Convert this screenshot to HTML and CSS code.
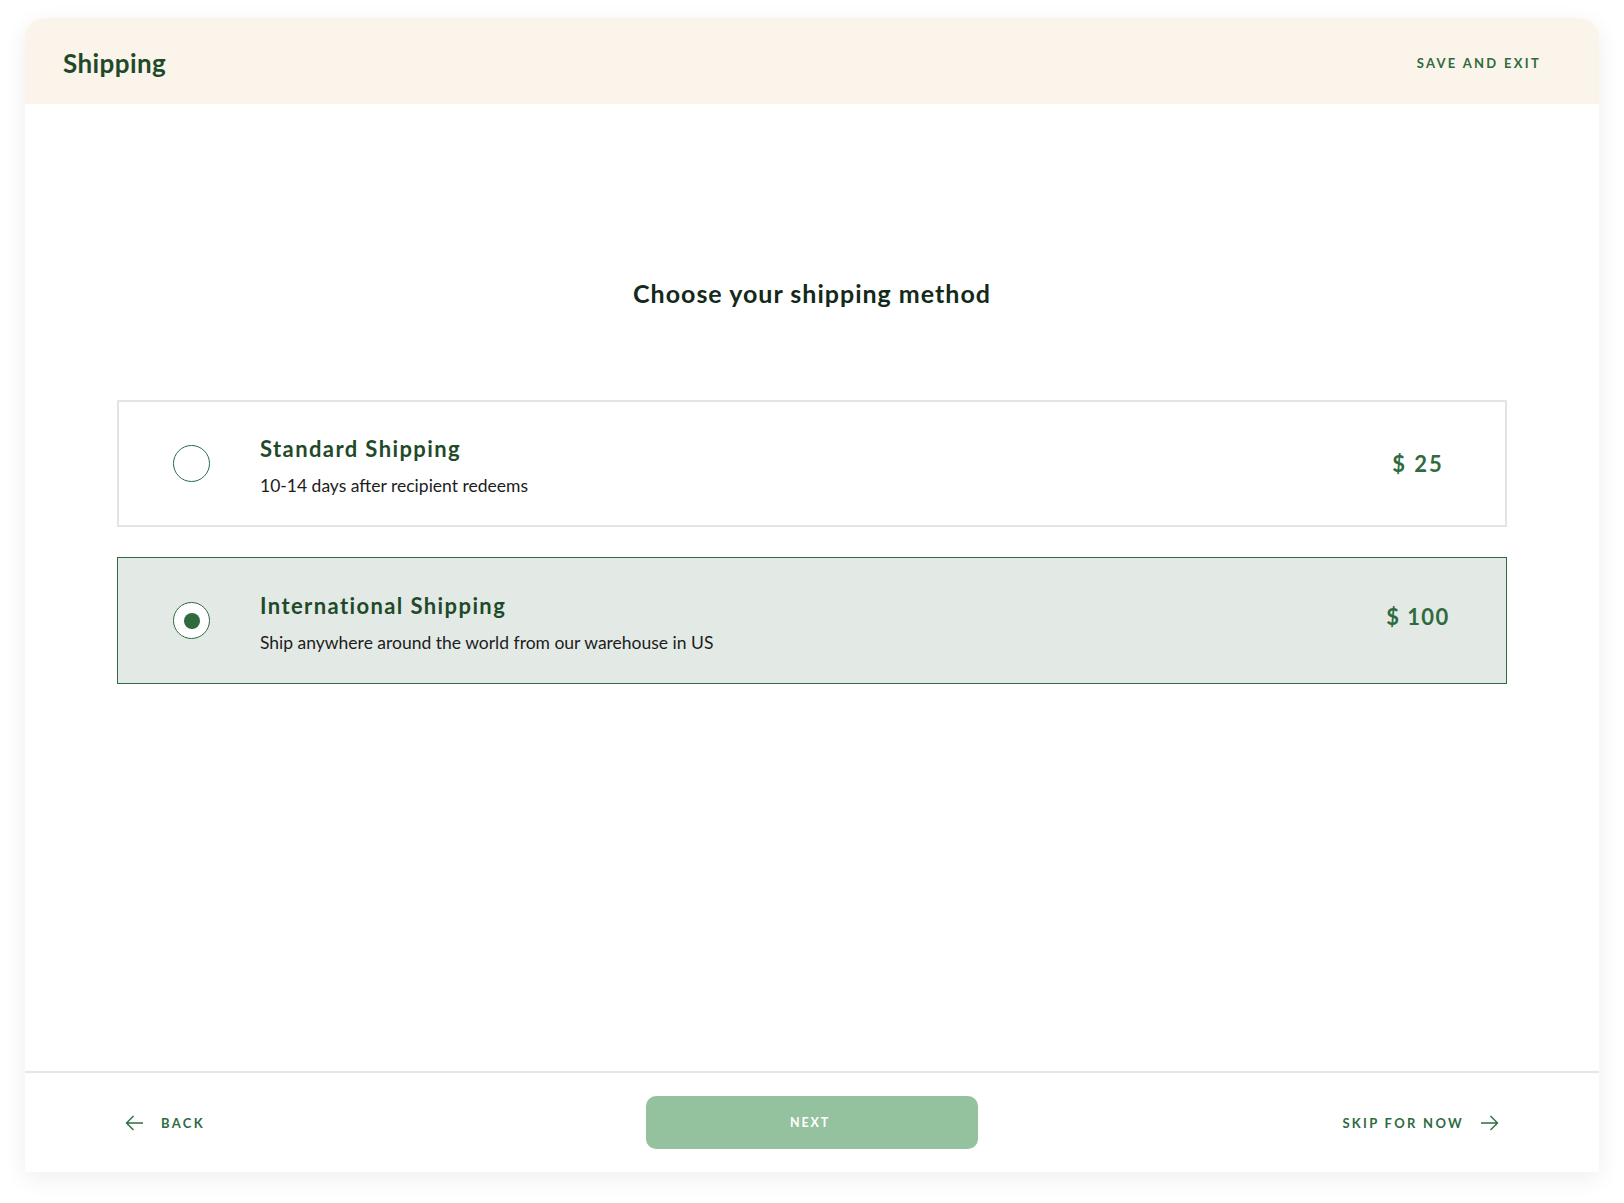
FILE: index.html
```
<!DOCTYPE html>
<html lang="en">
<head>
<meta charset="utf-8">
<title>Shipping</title>
<link rel="stylesheet" href="styles.css">
</head>
<body>
<div class="panel">
  <header class="header">
    <h1 class="header-title">Shipping</h1>
    <a class="link-label save">SAVE AND EXIT</a>
  </header>
  <main class="main">
    <h2 class="question">Choose your shipping method</h2>
    <div class="options">
      <div class="option">
        <span class="radio"></span>
        <div class="option-text">
          <div class="option-title">Standard Shipping</div>
          <div class="option-desc">10-14 days after recipient redeems</div>
        </div>
        <div class="price">$ 25</div>
      </div>
      <div class="option selected">
        <span class="radio"><span class="dot"></span></span>
        <div class="option-text">
          <div class="option-title">International Shipping</div>
          <div class="option-desc">Ship anywhere around the world from our warehouse in US</div>
        </div>
        <div class="price">$ 100</div>
      </div>
    </div>
  </main>
  <footer class="footer">
    <a class="nav back">
      <svg class="arrow" width="19" height="16" viewBox="0 0 19 16"><path d="M18 8H1.5M8.5 1L1.5 8l7 7" fill="none" stroke="#2f6b3f" stroke-width="1.4"/></svg>
      <span class="link-label">BACK</span>
    </a>
    <button class="next">NEXT</button>
    <a class="nav skip">
      <span class="link-label">SKIP FOR NOW</span>
      <svg class="arrow" width="19" height="16" viewBox="0 0 19 16"><path d="M1 8h16.5M10.5 1l7 7-7 7" fill="none" stroke="#2f6b3f" stroke-width="1.4"/></svg>
    </a>
  </footer>
</div>
</body>
</html>
```
FILE: styles.css
```
* { box-sizing: border-box; }
html, body { margin: 0; background: #ffffff; }
body {
  padding: 18px 25px 31px;
  font-family: Lato, "Liberation Sans", sans-serif;
}
.panel {
  height: 1154px;
  background: #ffffff;
  border-radius: 20px 20px 0 0;
  box-shadow: 0 6px 24px rgba(0, 0, 0, 0.07);
  display: flex;
  flex-direction: column;
}
.header {
  height: 86px;
  background: #fbf4ea;
  border-radius: 20px 20px 0 0;
  display: flex;
  align-items: center;
  justify-content: space-between;
  padding: 3px 58px 0 38px;
}
.header-title {
  margin: 0;
  font-size: 26px;
  font-weight: 700;
  color: #1f4a2a;
  line-height: 32px;
  letter-spacing: 0.4px;
}
.link-label {
  font-size: 13px;
  font-weight: 700;
  letter-spacing: 2.3px;
  color: #2f6b3f;
}
.main {
  flex: 1;
  padding: 173px 92px 0;
}
.question {
  margin: 0;
  text-align: center;
  font-size: 25px;
  line-height: 32px;
  font-weight: 700;
  letter-spacing: 1px;
  color: #13291a;
}
.options {
  margin-top: 91px;
  display: flex;
  flex-direction: column;
  gap: 30px;
}
.option {
  height: 127px;
  border: 2px solid #e4e4e4;
  background: #ffffff;
  display: flex;
  align-items: center;
  padding: 0 27px 0 54px;
}
.option.selected {
  border: 1px solid #2f6b3f;
  background: #e3eae6;
  padding: 0 28px 0 55px;
}
.radio {
  width: 37px;
  height: 37px;
  border: 1px solid #2f6b3f;
  border-radius: 50%;
  background: #ffffff;
  display: flex;
  align-items: center;
  justify-content: center;
  flex: none;
}
.dot {
  width: 16px;
  height: 16px;
  border-radius: 50%;
  background: #2f6b3f;
}
.option-text {
  margin-left: 50px;
  display: flex;
  flex-direction: column;
  gap: 12px;
  margin-top: 4px;
}
.option-title {
  font-size: 22px;
  line-height: 28px;
  font-weight: 700;
  color: #1f4a2a;
  letter-spacing: 1.4px;
}
.option-desc {
  font-size: 17.5px;
  line-height: 22px;
  color: #1c1c1c;
}
.price {
  margin-left: auto;
  width: 120px;
  text-align: center;
  font-size: 22px;
  font-weight: 700;
  letter-spacing: 2px;
  color: #2f6b3f;
}
.selected .price {
  margin-top: -8px;
  letter-spacing: 1.4px;
}
.footer {
  height: 101px;
  border-top: 2px solid #e6e6e6;
  display: grid;
  grid-template-columns: 1fr auto 1fr;
  align-items: center;
  padding: 0 100px;
}
.nav {
  display: flex;
  align-items: center;
  gap: 17px;
  cursor: pointer;
}
.back { justify-self: start; }
.skip { justify-self: end; gap: 16px; }
.arrow { display: block; }
.next {
  width: 332px;
  height: 53px;
  border: none;
  border-radius: 10px;
  background: #94c29e;
  color: #ffffff;
  font-family: inherit;
  font-size: 12.5px;
  font-weight: 700;
  letter-spacing: 1.8px;
  padding-left: 2px;
}
```
